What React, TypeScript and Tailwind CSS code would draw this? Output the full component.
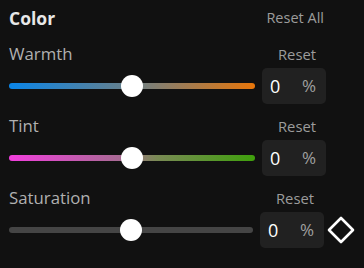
import { useState } from 'react';

type Row = {
    label: string;
    track: string;
    keyframe?: boolean;
};

const rows: Row[] = [
    { label: 'Warmth', track: 'bg-[linear-gradient(to_right,#0a85e8,#6b8088_50%,#e8760a)]' },
    { label: 'Tint', track: 'bg-[linear-gradient(to_right,#f23fdd,#a86a94_45%,#7a8a55_60%,#3fa00c)]' },
    { label: 'Saturation', track: 'bg-[#454545]', keyframe: true },
];

function Slider({ track, value }: { track: string; value: number }) {
    return (
        <div className="relative flex-1 h-[22px] flex items-center">
            <div className={`w-full h-[6px] rounded-full ${track}`} />
            <div
                className="absolute top-0 w-[22px] h-[22px] rounded-full bg-white -translate-x-1/2"
                style={{ left: `${value}%` }}
            />
        </div>
    );
}

export default function App() {
    const [values] = useState([50, 50, 50]);

    return (
        <div className="w-[364px] h-[268px] bg-[#111111] pl-[9px] font-['Open_Sans',sans-serif] overflow-hidden">
            {/* Header */}
            <div className="flex items-start justify-between pt-[8px] pb-[4px] pr-[40px] h-[32px]">
                <span className="text-[17.5px] leading-[20px] font-bold text-[#e8e8e8]">Color</span>
                <span className="text-[14.5px] leading-[20px] text-[#9c9c9c]">Reset All</span>
            </div>

            {rows.map((r, i) => (
                <div key={r.label}>
                    <div className="flex items-end h-[36px] pb-[4px]">
                        <span className="flex-1 text-[16.8px] leading-[20px] text-[#b0b0b0]">{r.label}</span>
                        <span className={`w-[64px] text-center pl-[6px] text-[14.8px] leading-[20px] text-[#9c9c9c] ${r.keyframe ? 'mr-[40px]' : 'mr-[38px]'}`}>
                            Reset
                        </span>
                    </div>
                    <div className="flex items-center h-[36px]">
                        <Slider track={r.track} value={values[i]} />
                        <div className="ml-[7px] w-[64px] h-[36px] rounded-[5px] bg-[#212121] flex items-center justify-between pl-[8px] pr-[10px]">
                            <span className="text-[18px] leading-[24px] text-white">0</span>
                            <span className="text-[17px] leading-[24px] text-[#a0a0a0]">%</span>
                        </div>
                        {r.keyframe ? (
                            <div className="w-[40px] flex justify-start pl-[3px]">
                                <svg width="28" height="28" viewBox="0 0 28 28">
                                    <path d="M14 2 L26 14 L14 26 L2 14 Z" fill="none" stroke="white" strokeWidth="2.6" strokeLinejoin="round" />
                                </svg>
                            </div>
                        ) : (
                            <div className="w-[38px]" />
                        )}
                    </div>
                </div>
            ))}
        </div>
    );
}
